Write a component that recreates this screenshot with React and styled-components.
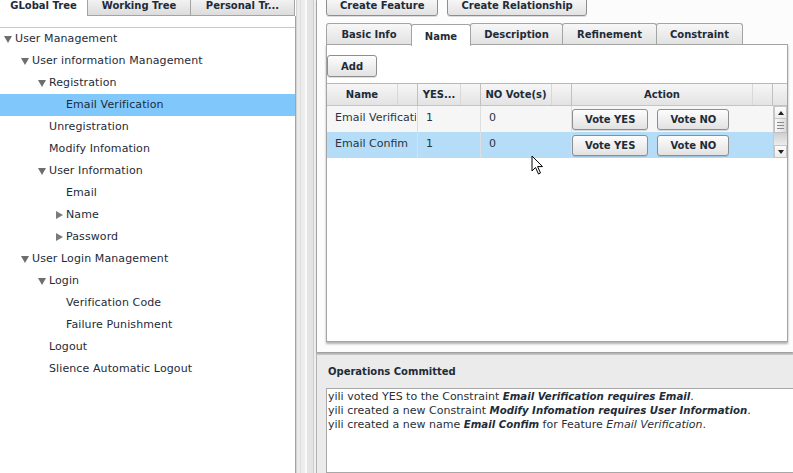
import React from "react";
import styled, { createGlobalStyle } from "styled-components";

const GlobalStyle = createGlobalStyle`
  html, body {
    margin: 0;
    padding: 0;
    overflow: hidden;
    background: #fff;
  }
  body {
    font-family: "DejaVu Sans", Verdana, sans-serif;
    font-size: 11px;
    color: #1e2b38;
  }
  * {
    box-sizing: border-box;
  }
`;

const treeData = [
  { label: "User Management", level: 0, state: "open" },
  { label: "User information Management", level: 1, state: "open" },
  { label: "Registration", level: 2, state: "open" },
  { label: "Email Verification", level: 3, state: "leaf", selected: true },
  { label: "Unregistration", level: 2, state: "leaf" },
  { label: "Modify Infomation", level: 2, state: "leaf" },
  { label: "User Information", level: 2, state: "open" },
  { label: "Email", level: 3, state: "leaf" },
  { label: "Name", level: 3, state: "closed" },
  { label: "Password", level: 3, state: "closed" },
  { label: "User Login Management", level: 1, state: "open" },
  { label: "Login", level: 2, state: "open" },
  { label: "Verification Code", level: 3, state: "leaf" },
  { label: "Failure Punishment", level: 3, state: "leaf" },
  { label: "Logout", level: 2, state: "leaf" },
  { label: "Slience Automatic Logout", level: 2, state: "leaf" },
];

const columns = [
  { title: "Name", width: 91 },
  { title: "YES...", width: 63 },
  { title: "NO Vote(s)", width: 91 },
  { title: "Action", width: 201 },
];

const votes = [
  { name: "Email Verification", yes: 1, no: 0 },
  { name: "Email Confim", yes: 1, no: 0, selected: true },
];

const App = () => {
  return (
    <>
      <GlobalStyle />
      <Shell>
        <LeftPane>
          <TreeTabs>
            <TreeTab $w={88} $active>
              GLobal Tree
            </TreeTab>
            <TreeTab $w={103}>Working Tree</TreeTab>
            <TreeTab $w={104}>Personal Tr...</TreeTab>
          </TreeTabs>
          <TreeFrame>
            <Tree>
              {treeData.map((node) => (
                <TreeRow
                  key={node.label + node.level}
                  $level={node.level}
                  $selected={node.selected}
                >
                  <Toggle>
                    {node.state !== "leaf" && <Arrow $dir={node.state} />}
                  </Toggle>
                  {node.label}
                </TreeRow>
              ))}
            </Tree>
          </TreeFrame>
        </LeftPane>

        <VSplit />

        <RightPane>
          <Workspace>
            <ButtonRow>
              <Button>Create Feature</Button>
              <Button>Create Relationship</Button>
            </ButtonRow>
            <TabStrip>
              <Tab $w={86}>Basic Info</Tab>
              <Tab $w={60} $active>
                Name
              </Tab>
              <Tab $w={93}>Description</Tab>
              <Tab $w={95}>Refinement</Tab>
              <Tab $w={87}>Constraint</Tab>
            </TabStrip>
            <TabBody>
              <AddButton>Add</AddButton>
              <Grid>
                <HeaderRow>
                  {columns.map((c) => (
                    <HeaderCell key={c.title} $w={c.width}>
                      <HeaderLabel>{c.title}</HeaderLabel>
                      <HeaderHandle />
                    </HeaderCell>
                  ))}
                  <HeaderFiller />
                </HeaderRow>
                <GridBody>
                  <Rows>
                    {votes.map((v) => (
                      <Row key={v.name} $selected={v.selected}>
                        <Cell $w={91}>
                          <CellText>{v.name}</CellText>
                        </Cell>
                        <Cell $w={63}>
                          <CellText>{v.yes}</CellText>
                        </Cell>
                        <Cell $w={91}>
                          <CellText>{v.no}</CellText>
                        </Cell>
                        <ActionCell>
                          <VoteButton>Vote YES</VoteButton>
                          <VoteButton>Vote NO</VoteButton>
                        </ActionCell>
                      </Row>
                    ))}
                  </Rows>
                  <Scrollbar>
                    <ScrollArrow>
                      <ArrowGlyph $up />
                    </ScrollArrow>
                    <Thumb>
                      <Grip />
                      <Grip />
                      <Grip />
                    </Thumb>
                    <Track />
                    <ScrollArrow>
                      <ArrowGlyph />
                    </ScrollArrow>
                  </Scrollbar>
                </GridBody>
              </Grid>
            </TabBody>
          </Workspace>

          <OpsPanel>
            <OpsTitle>Operations Committed</OpsTitle>
            <LogBox>
              <div>
                yili voted YES to the Constraint{" "}
                <Strong>Email Verification requires Email</Strong>.
              </div>
              <div>
                yili created a new Constraint{" "}
                <Strong>Modify Infomation requires User Information</Strong>.
              </div>
              <div>
                yili created a new name <Strong>Email Confim</Strong> for
                Feature <em>Email Verification</em>.
              </div>
            </LogBox>
          </OpsPanel>
        </RightPane>

        <Cursor width="13" height="21" viewBox="0 0 13 21">
          <path
            d="M1 1 L1 16 L4.5 12.5 L7.5 19 L9.5 18 L6.6 11.6 L11.5 11.6 Z"
            fill="#fff"
            stroke="#000"
            strokeWidth="1"
            strokeLinejoin="round"
          />
        </Cursor>
      </Shell>
    </>
  );
};

const Shell = styled.div`
  position: relative;
  display: flex;
  width: 793px;
  height: 473px;
  overflow: hidden;
`;

const LeftPane = styled.div`
  width: 296px;
  flex: none;
  display: flex;
  flex-direction: column;
  background: #fff;
`;

const TreeTabs = styled.div`
  display: flex;
  height: 16px;
  flex: none;
`;

const TreeTab = styled.div`
  width: ${(p) => p.$w}px;
  height: 16px;
  border-right: 1px solid #a4a4a4;
  border-bottom: ${(p) => (p.$active ? "none" : "1px solid #a4a4a4")};
  background: ${(p) =>
    p.$active ? "#fff" : "linear-gradient(#f2f2f2, #dcdcdc)"};
  font-weight: bold;
  font-size: 10px;
  line-height: 12px;
  text-align: center;
  white-space: nowrap;
  color: #1e2b38;
`;

const TreeFrame = styled.div`
  flex: 1;
  border-right: 1px solid #a4a4a4;
  padding-top: 11px;
`;

const Tree = styled.div`
  border-top: 1px solid #c8c8c8;
`;

const TreeRow = styled.div`
  height: 22px;
  display: flex;
  align-items: center;
  padding-left: ${(p) => 4 + p.$level * 17}px;
  padding-bottom: 1px;
  white-space: nowrap;
  background: ${(p) => (p.$selected ? "#80c8fc" : "transparent")};
  color: #1e2b38;
  letter-spacing: 0.1px;
`;

const Toggle = styled.span`
  width: 11px;
  flex: none;
  display: flex;
  align-items: center;
`;

const Arrow = styled.span`
  width: 0;
  height: 0;
  ${(p) =>
    p.$dir === "open"
      ? `
    border-left: 4px solid transparent;
    border-right: 4px solid transparent;
    border-top: 7px solid #6e6e6e;
    margin-top: 2px;
  `
      : `
    border-top: 4px solid transparent;
    border-bottom: 4px solid transparent;
    border-left: 7px solid #7a7a7a;
    margin-left: 1px;
    margin-top: 1px;
  `}
`;

const VSplit = styled.div`
  width: 20px;
  flex: none;
  background: linear-gradient(
    to right,
    #d2d2d2 0 1px,
    #ebebeb 1px 4px,
    #dedede 4px 5px,
    #ededed 5px 9px,
    #fafafa 9px 11px,
    #e4e4e4 11px 17px,
    #cdcdcd 17px 18px,
    #efefef 18px 20px
  );
`;

const RightPane = styled.div`
  flex: 1;
  min-width: 0;
  display: flex;
  flex-direction: column;
  background: #c9c9c9;
  border-left: 1px solid #b4b4b4;
`;

const Workspace = styled.div`
  height: 352px;
  flex: none;
  display: flex;
  flex-direction: column;
  padding: 0 5px 10px 9px;
  background: #fcfcfc;
  box-shadow: 0 1px 2px rgba(0, 0, 0, 0.3);
  position: relative;
  z-index: 1;
`;

const ButtonRow = styled.div`
  display: flex;
  gap: 9px;
  margin-top: -6px;
`;

const Button = styled.button`
  height: 22px;
  padding: 0 13px;
  border: 1px solid #8e8e8e;
  border-radius: 3px;
  background: linear-gradient(#fdfdfd, #e2e2e2);
  box-shadow: 0 1px 0 rgba(0, 0, 0, 0.12);
  font-family: "DejaVu Sans", Verdana, sans-serif;
  font-weight: bold;
  font-size: 10px;
  color: #1e2b38;
  white-space: nowrap;
  cursor: pointer;
`;

const TabStrip = styled.div`
  display: flex;
  height: 21px;
  margin-top: 7px;
  flex: none;
`;

const Tab = styled.div`
  position: relative;
  width: ${(p) => p.$w}px;
  height: ${(p) => (p.$active ? 22 : 21)}px;
  margin-top: ${(p) => (p.$active ? 1 : 0)}px;
  margin-left: -1px;
  &:first-child {
    margin-left: 0;
  }
  z-index: ${(p) => (p.$active ? 2 : 0)};
  display: flex;
  align-items: center;
  justify-content: center;
  padding-top: ${(p) => (p.$active ? 2 : 0)}px;
  border: 1px solid #a4a4a4;
  border-bottom: none;
  border-radius: 3px 3px 0 0;
  background: ${(p) =>
    p.$active ? "#fff" : "linear-gradient(#f7f7f7, #e2e2e2)"};
  font-weight: bold;
  font-size: 10px;
  color: #1e2b38;
  white-space: nowrap;
`;

const TabBody = styled.div`
  flex: 1;
  display: flex;
  flex-direction: column;
  padding-top: 10px;
  border: 1px solid #a4a4a4;
  background: #fff;
  box-shadow: 0 2px 2px rgba(0, 0, 0, 0.3);
  position: relative;
  z-index: 1;
`;

const AddButton = styled(Button)`
  align-self: flex-start;
  padding: 0 13px;
`;

const Grid = styled.div`
  margin-top: 6px;
  border-top: 1px solid #b8b8b8;
`;

const HeaderRow = styled.div`
  display: flex;
  height: 22px;
  background: linear-gradient(#f6f6f6, #e3e3e3);
  border-bottom: 1px solid #c4c4c4;
`;

const HeaderCell = styled.div`
  width: ${(p) => p.$w}px;
  flex: none;
  display: flex;
  border-right: 1px solid #c0c0c0;
`;

const HeaderLabel = styled.div`
  flex: 1;
  display: flex;
  align-items: center;
  justify-content: center;
  font-weight: bold;
  font-size: 10px;
  color: #1e2b38;
  white-space: nowrap;
`;

const HeaderHandle = styled.div`
  width: 20px;
  border-left: 1px solid #d8d8d8;
`;

const HeaderFiller = styled.div`
  flex: 1;
`;

const GridBody = styled.div`
  display: flex;
`;

const Rows = styled.div`
  width: 446px;
  flex: none;
`;

const Row = styled.div`
  display: flex;
  height: 26px;
  background: ${(p) => (p.$selected ? "#b5ddf8" : "#f6f6f6")};
`;

const Cell = styled.div`
  width: ${(p) => p.$w}px;
  flex: none;
  display: flex;
  align-items: center;
  padding: 0 1px 3px 8px;
  border-right: 1px solid #dedede;
  color: #2a3440;
`;

const CellText = styled.span`
  display: block;
  min-width: 0;
  white-space: nowrap;
  overflow: hidden;
  text-overflow: clip;
`;

const ActionCell = styled.div`
  flex: 1;
  display: flex;
  align-items: center;
  gap: 9px;
  padding-left: 0;
`;

const VoteButton = styled(Button)`
  height: 21px;
  padding: 0 12px;
`;

const Scrollbar = styled.div`
  width: 15px;
  height: 52px;
  display: flex;
  flex-direction: column;
  border-left: 1px solid #c8c8c8;
  background: #eaeaea;
`;

const ScrollArrow = styled.div`
  height: 13px;
  flex: none;
  display: flex;
  align-items: center;
  justify-content: center;
  background: linear-gradient(#fcfcfc, #ececec);
  border: 1px solid #c6c6c6;
`;

const ArrowGlyph = styled.span`
  width: 0;
  height: 0;
  border-left: 3px solid transparent;
  border-right: 3px solid transparent;
  ${(p) =>
    p.$up ? "border-bottom: 4px solid #222;" : "border-top: 4px solid #222;"}
`;

const Thumb = styled.div`
  height: 14px;
  flex: none;
  display: flex;
  flex-direction: column;
  align-items: center;
  justify-content: center;
  gap: 2px;
  background: linear-gradient(to right, #fafafa, #dcdcdc);
  border: 1px solid #c0c0c0;
  border-top: none;
`;

const Grip = styled.span`
  width: 7px;
  height: 1px;
  background: #8a8a8a;
`;

const Track = styled.div`
  flex: 1;
  background: linear-gradient(#cfcfcf, #ededed);
`;

const OpsPanel = styled.div`
  flex: 1;
  display: flex;
  flex-direction: column;
  margin-top: 3px;
  padding: 11px 0 0 9px;
  background: #ebebeb;
  overflow: hidden;
`;

const OpsTitle = styled.div`
  font-weight: bold;
  font-size: 10px;
  line-height: 12px;
  margin-left: 2px;
  color: #1e2b38;
`;

const LogBox = styled.div`
  flex: 1;
  margin-top: 10px;
  margin-right: -12px;
  padding: 1px 1px;
  border: 1px solid #a8a8a8;
  background: #fff;
  font-size: 11px;
  line-height: 14px;
  color: #2a2f36;
  white-space: nowrap;

  em {
    font-style: italic;
  }
`;

const Strong = styled.b`
  font-weight: bold;
  font-style: italic;
  font-size: 10.2px;
  color: #1e2b38;
`;

const Cursor = styled.svg`
  position: absolute;
  left: 531px;
  top: 155px;
  z-index: 5;
`;

export default App;
